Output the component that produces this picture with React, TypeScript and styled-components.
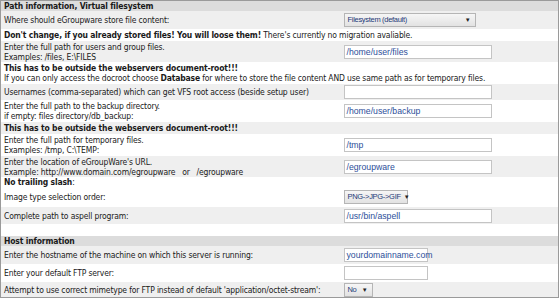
import React from "react";
import styled, { createGlobalStyle } from "styled-components";

const GlobalStyle = createGlobalStyle`
    html, body {
        margin: 0;
        padding: 0;
        background: #ffffff;
    }
    body {
        font-family: "DejaVu Sans Condensed", "DejaVu Sans", sans-serif;
        font-size: 8.5px;
        letter-spacing: -0.15px;
        color: #1a1a1a;
    }
`;

const Frame = styled.table`
    width: 559px;
    border: 1px solid #9a9a9a;
    border-collapse: collapse;
    table-layout: fixed;
    line-height: 10px;
`;

const HeaderCell = styled.td`
    background: #dcdcdc;
    font-weight: bold;
    padding: 0 3px;
    height: 10px;
`;

const Row = styled.tr<{ $shade?: boolean }>`
    background: ${(p) => (p.$shade ? "#efefef" : "#ffffff")};
`;

const Label = styled.td<{ $h?: number }>`
    padding: 0 3px;
    height: ${(p) => (p.$h ? `${p.$h}px` : "auto")};
    vertical-align: middle;
    white-space: nowrap;
    overflow: visible;
`;

const Field = styled.td`
    padding: 0 0 0 1px;
    vertical-align: middle;
`;

const TextInput = styled.span<{ $w: number }>`
    display: flex;
    align-items: center;
    box-sizing: border-box;
    width: ${(p) => p.$w}px;
    height: 14px;
    padding: 0 2px;
    border: 1px solid #c4c4c4;
    background: #fff;
    color: #2d4f9a;
    font-family: "Liberation Sans", Arial, sans-serif;
    font-size: 8.7px;
    letter-spacing: 0;
`;

const SelectBox = styled.span<{ $w: number }>`
    display: flex;
    align-items: center;
    justify-content: space-between;
    box-sizing: border-box;
    width: ${(p) => p.$w}px;
    height: 14px;
    padding: 0 4px 0 3px;
    border: 1px solid #b5b5b5;
    background: linear-gradient(#f6f6f6, #e2e2e2);
    color: #1f3a78;
    font-family: "Liberation Sans", Arial, sans-serif;
    font-size: 7.5px;
    letter-spacing: -0.3px;
    white-space: nowrap;
`;

const Caret = styled.span`
    color: #222;
    font-size: 6px;
    margin-left: 3px;
`;

const Spacer = styled.td`
    height: 10px;
`;

type Choice = { value: string; w: number };

const Select: React.FC<Choice> = ({ value, w }) => (
    <SelectBox $w={w}>
        <span>{value}</span>
        <Caret>▼</Caret>
    </SelectBox>
);

export default function App() {
    return (
        <>
            <GlobalStyle />
            <Frame>
                <colgroup>
                    <col style={{ width: 342 }} />
                    <col />
                </colgroup>
                <tbody>
                    <tr>
                        <HeaderCell colSpan={2}>Path information, Virtual filesystem</HeaderCell>
                    </tr>
                    <Row $shade>
                        <Label $h={18}>Where should eGroupware store file content:</Label>
                        <Field>
                            <Select value="Filesystem (default)" w={132} />
                        </Field>
                    </Row>
                    <Row>
                        <Label colSpan={2} $h={12}>
                            <b>Don't change, if you already stored files! You will loose them!</b> There's currently no migration avaliable.
                        </Label>
                    </Row>
                    <Row $shade>
                        <Label $h={21}>
                            Enter the full path for users and group files.
                            <br />
                            Examples: /files, E:\FILES
                        </Label>
                        <Field>
                            <TextInput $w={148}>/home/user/files</TextInput>
                        </Field>
                    </Row>
                    <Row>
                        <Label colSpan={2} $h={22}>
                            <b>This has to be outside the webservers document-root!!!</b>
                            <br />
                            If you can only access the docroot choose <b>Database</b> for where to store the file content AND use same path as for temporary files.
                        </Label>
                    </Row>
                    <Row $shade>
                        <Label $h={16}>Usernames (comma-separated) which can get VFS root access (beside setup user)</Label>
                        <Field>
                            <TextInput $w={148} />
                        </Field>
                    </Row>
                    <Row>
                        <Label $h={22}>
                            Enter the full path to the backup directory.
                            <br />
                            if empty: files directory/db_backup:
                        </Label>
                        <Field>
                            <TextInput $w={148}>/home/user/backup</TextInput>
                        </Field>
                    </Row>
                    <Row $shade>
                        <Label colSpan={2} $h={12}>
                            <b>This has to be outside the webservers document-root!!!</b>
                        </Label>
                    </Row>
                    <Row>
                        <Label $h={22}>
                            Enter the full path for temporary files.
                            <br />
                            Examples: /tmp, C:\TEMP:
                        </Label>
                        <Field>
                            <TextInput $w={148}>/tmp</TextInput>
                        </Field>
                    </Row>
                    <Row $shade>
                        <Label $h={21}>
                            Enter the location of eGroupWare's URL.
                            <br />
                            Example: http://www.domain.com/egroupware &nbsp; or &nbsp; /egroupware
                        </Label>
                        <Field>
                            <TextInput $w={148}>/egroupware</TextInput>
                        </Field>
                    </Row>
                    <Row>
                        <Label colSpan={2} $h={10}>
                            <b>No trailing slash</b>:
                        </Label>
                    </Row>
                    <Row>
                        <Label $h={20}>Image type selection order:</Label>
                        <Field>
                            <Select value="PNG->JPG->GIF" w={64} />
                        </Field>
                    </Row>
                    <Row $shade>
                        <Label $h={17}>Complete path to aspell program:</Label>
                        <Field>
                            <TextInput $w={148}>/usr/bin/aspell</TextInput>
                        </Field>
                    </Row>
                    <Row>
                        <Spacer colSpan={2} />
                    </Row>
                    <tr>
                        <HeaderCell colSpan={2}>Host information</HeaderCell>
                    </tr>
                    <Row $shade>
                        <Label $h={18}>Enter the hostname of the machine on which this server is running:</Label>
                        <Field>
                            <TextInput $w={84}>yourdomainname.com</TextInput>
                        </Field>
                    </Row>
                    <Row>
                        <Label $h={18}>Enter your default FTP server:</Label>
                        <Field>
                            <TextInput $w={84} />
                        </Field>
                    </Row>
                    <Row $shade>
                        <Label $h={15}>Attempt to use correct mimetype for FTP instead of default 'application/octet-stream':</Label>
                        <Field>
                            <Select value="No" w={29} />
                        </Field>
                    </Row>
                </tbody>
            </Frame>
        </>
    );
}
